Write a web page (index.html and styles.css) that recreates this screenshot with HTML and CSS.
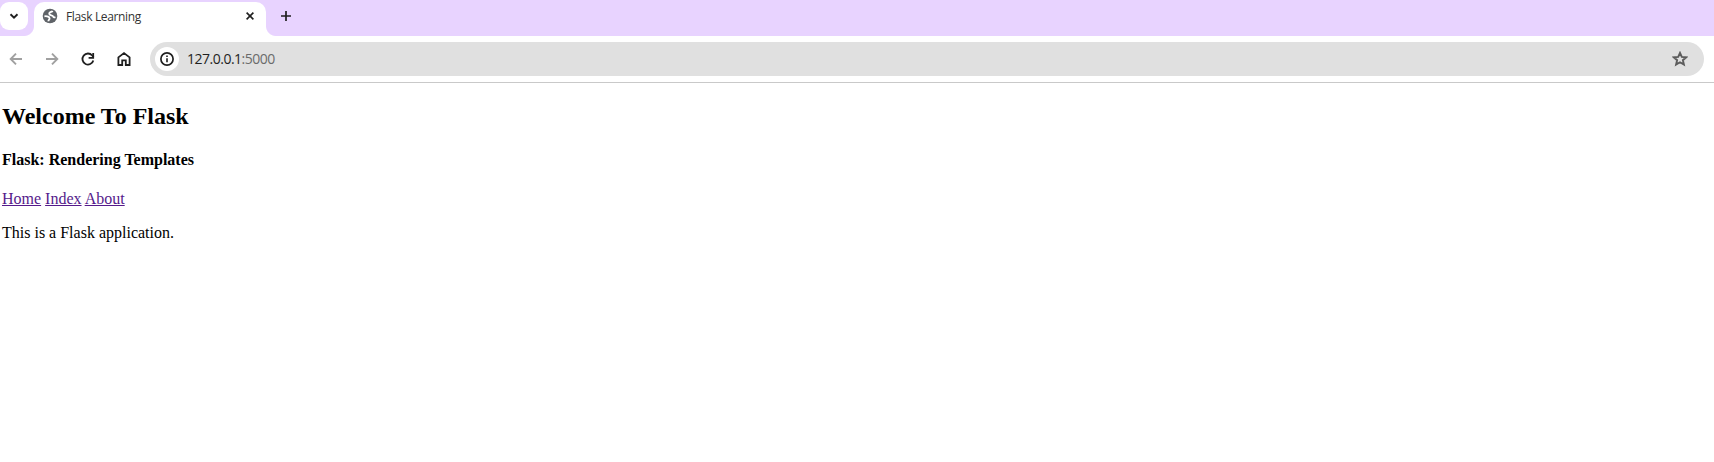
FILE: index.html
```html
<!DOCTYPE html>
<html lang="en">
<head>
<meta charset="utf-8">
<title>Flask Learning</title>
<link rel="stylesheet" href="styles.css">
</head>
<body>
<header class="tabstrip">
  <div class="tab-search">
    <svg width="28" height="28" viewBox="0 0 28 28"><path d="M10.5 12.2 14 15.6l3.5-3.4" fill="none" stroke="#1f1f1f" stroke-width="1.9"/></svg>
  </div>
  <div class="tab">
    <svg class="favicon" width="16" height="16" viewBox="0 0 16 16"><circle cx="8" cy="8" r="7.3" fill="#5f6368"/><path d="M10.6 2.8C10 4.2 7.2 3.8 7.2 5.7c0 2 3.6 1.2 4 2.9.2.8 1.2.8 2.2.5M2.4 8.3c2.8-.4 5.2.4 5.2 2.2 0 1.2-1.2 1.2-1.2 2.8" fill="none" stroke="#fff" stroke-width="1.8"/></svg>
    <span class="tab-title">Flask Learning</span>
    <svg class="close" width="16" height="16" viewBox="0 0 16 16"><path d="m4.6 4.6 6.8 6.8m0-6.8-6.8 6.8" stroke="#1f1f1f" stroke-width="1.6"/></svg>
  </div>
  <svg class="new-tab" width="16" height="16" viewBox="0 0 16 16"><path d="M8 3v10M3 8h10" stroke="#1f1f1f" stroke-width="1.7"/></svg>
</header>
<nav class="toolbar">
  <svg class="tool" width="16" height="16" viewBox="0 0 16 16"><path d="M14 8H3M8 2.7 2.7 8 8 13.3" fill="none" stroke="#a0a0a0" stroke-width="1.9"/></svg>
  <svg class="tool" width="16" height="16" viewBox="0 0 16 16"><path d="M2 8h11M8 2.7 13.3 8 8 13.3" fill="none" stroke="#a0a0a0" stroke-width="1.9"/></svg>
  <svg class="tool" width="16" height="16" viewBox="0 0 16 16"><path d="M13.3 9.4A5.5 5.5 0 1 1 12.2 4.5L13.6 6" fill="none" stroke="#1f1f1f" stroke-width="1.8"/><path d="M13.2 2v4.8H8.6" fill="none" stroke="#1f1f1f" stroke-width="1.8"/></svg>
  <svg class="tool" width="16" height="16" viewBox="0 0 16 16"><path d="M2.4 14V6.4L8 2.1l5.6 4.3V14H9.8V9.4H6.2V14Z" fill="none" stroke="#1f1f1f" stroke-width="1.8"/></svg>
  <div class="address">
    <span class="info"><svg width="16" height="16" viewBox="0 0 16 16"><circle cx="8" cy="8" r="6.1" fill="none" stroke="#1f1f1f" stroke-width="1.7"/><path d="M8 7.2v4M8 4.5v1.6" stroke="#1f1f1f" stroke-width="1.6"/></svg></span>
    <span class="url">127.0.0.1<span class="port">:5000</span></span>
    <svg class="star" width="16" height="16" viewBox="0 0 16 16"><path d="m8 1.9 1.8 4 4.4.4-3.3 2.9 1 4.4L8 11.3l-3.9 2.3 1-4.4L1.8 6.3l4.4-.4Z" fill="none" stroke="#5c5c5c" stroke-width="1.9"/></svg>
  </div>
</nav>
<main class="page">
  <h2>Welcome To Flask</h2>
  <h4>Flask: Rendering Templates</h4>
  <a href="#">Home</a> <a href="#">Index</a> <a href="#">About</a>
  <p>This is a Flask application.</p>
</main>
</body>
</html>
```
FILE: styles.css
```css
body {
  margin: 0;
  background: #fff;
  color: #000;
  font-family: "Liberation Serif", "Times New Roman", serif;
  font-size: 16px;
}

svg {
  display: block;
  flex: none;
}

.tabstrip {
  display: flex;
  box-sizing: border-box;
  height: 36px;
  padding-top: 2px;
  background: #e8d3ff;
}

.tab-search {
  width: 28px;
  height: 28px;
  border-radius: 9px;
  background: #fff;
}

.tab {
  position: relative;
  display: flex;
  box-sizing: border-box;
  width: 232px;
  height: 34px;
  margin-left: 6px;
  padding: 6px 8px 0;
  border-radius: 10px 10px 0 0;
  background: #fff;
}

/* Concave feet joining the tab to the toolbar */
.tab::before,
.tab::after {
  content: "";
  position: absolute;
  bottom: 0;
  width: 10px;
  height: 10px;
}

.tab::before {
  left: -10px;
  background: radial-gradient(circle at 0 0, transparent 9.5px, #fff 10.5px);
}

.tab::after {
  right: -10px;
  background: radial-gradient(circle at 100% 0, transparent 9.5px, #fff 10.5px);
}

.tab-title {
  flex: 1;
  margin-left: 8px;
  color: #333;
  font: 12px/18px "Open Sans", sans-serif;
  letter-spacing: -0.35px;
}

.new-tab {
  margin: 6px 0 0 12px;
}

.toolbar {
  display: flex;
  align-items: center;
  box-sizing: border-box;
  height: 47px;
  padding: 0 10px 0 8px;
  border-bottom: 1px solid #c9c9c9;
}

.tool {
  margin-right: 20px;
}

.tool:nth-child(4) {
  margin-right: 18px;
}

.address {
  display: flex;
  flex: 1;
  align-items: center;
  height: 34px;
  padding: 0 16px 0 5px;
  border-radius: 17px;
  background: #e0e0e0;
}

.info {
  display: grid;
  place-items: center;
  width: 24px;
  height: 24px;
  border-radius: 50%;
  background: #fff;
}

.url {
  flex: 1;
  margin-left: 8px;
  color: #1f1f1f;
  font: 14px/20px "Open Sans", sans-serif;
  letter-spacing: -0.5px;
}

.port {
  color: #6b6b6b;
}

.page {
  display: flow-root;
  padding-left: 2px;
}

.page a {
  color: #551a8b;
}
```
